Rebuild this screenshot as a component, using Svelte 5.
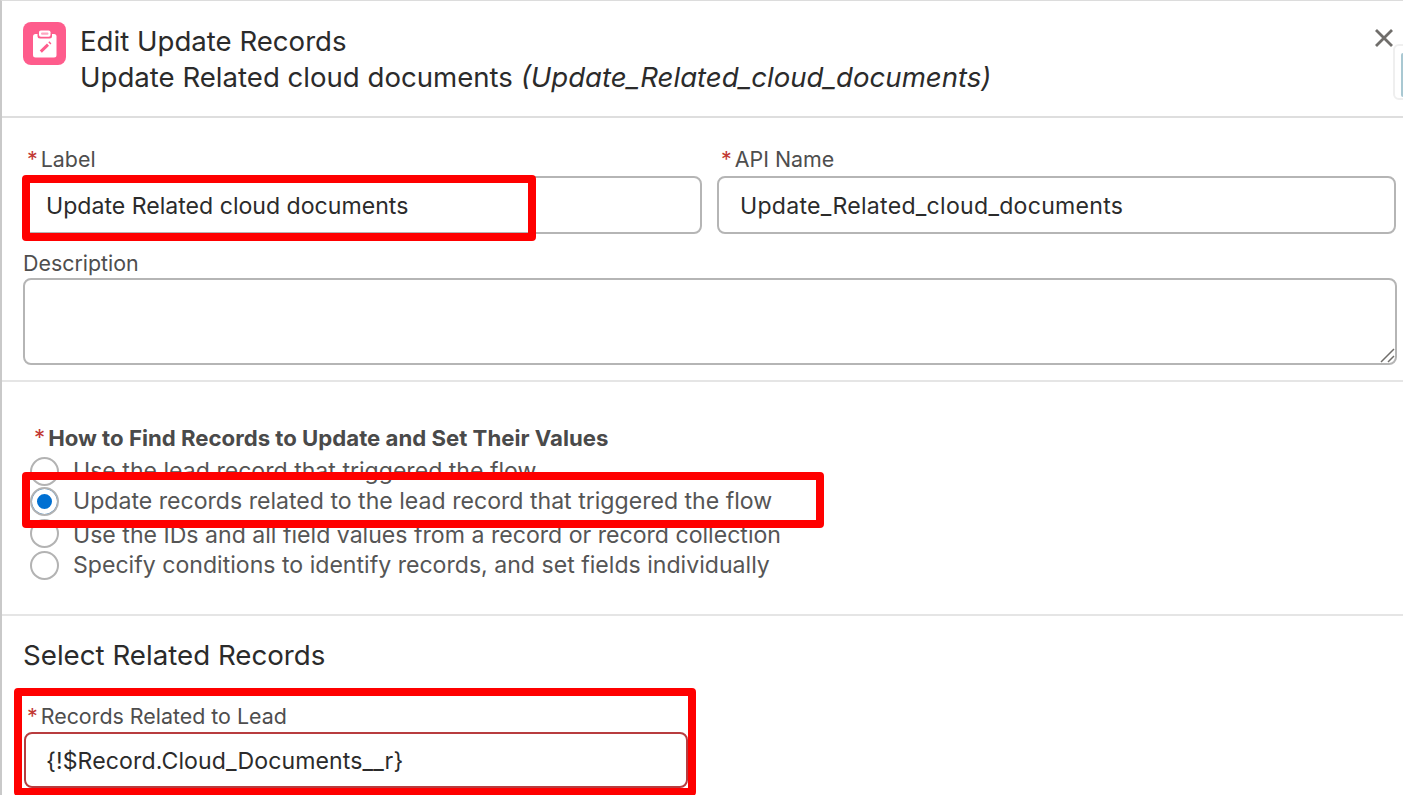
<script>
  const options = [
    { text: 'Use the lead record that triggered the flow', checked: false, cls: 'first' },
    { text: 'Update records related to the lead record that triggered the flow', checked: true, cls: 'second' },
    { text: 'Use the IDs and all field values from a record or record collection', checked: false, cls: 'third' },
    { text: 'Specify conditions to identify records, and set fields individually', checked: false, cls: 'fourth' }
  ];
</script>

<div class="page">
  <header class="head">
    <div class="icon">
      <svg viewBox="0 0 43 43" width="43" height="43">
        <rect x="10" y="12" width="23.500" height="23.500" rx="2.500" fill="#fff" />
        <rect x="14.500" y="7" width="14.500" height="9.500" rx="2.500" fill="#fe5c8c" />
        <rect x="16" y="8.500" width="11.500" height="6.200" rx="1.800" fill="#fff" />
        <rect x="18" y="10.500" width="7.500" height="2.200" rx="1" fill="#fe5c8c" opacity="0.55" />
        <path d="M17.800 29.600L25 22.700" stroke="#fe5c8c" stroke-width="3" fill="none" />
        <path d="M26.300 21.400l1.100-1" stroke="#fe5c8c" stroke-width="3" fill="none" />
      </svg>
    </div>
    <div class="titles">
      <div>Edit Update Records</div>
      <div>Update Related cloud documents <em>(Update_Related_cloud_documents)</em></div>
    </div>
    <button class="close" aria-label="Close">
      <svg viewBox="0 0 20 20" width="20" height="20"><path d="M2 2l16 16M18 2L2 18" stroke="#706e6b" stroke-width="2.800" fill="none" /></svg>
    </button>
    <div class="peek"><span></span></div>
  </header>

  <section class="fields">
    <div class="row">
      <div class="field">
        <div class="label"><i>*</i>Label</div>
        <div class="input">Update Related cloud documents</div>
      </div>
      <div class="field">
        <div class="label"><i>*</i>API Name</div>
        <div class="input api">Update_Related_cloud_documents</div>
      </div>
    </div>
    <div class="label desc-label">Description</div>
    <div class="textarea">
      <svg viewBox="0 0 16 16" width="16" height="16"><path d="M2 15L15 2M9 15l6-6" stroke="#706e6b" stroke-width="1.500" fill="none" /></svg>
    </div>
  </section>

  <section class="how">
    <div class="how-title"><i>*</i>How to Find Records to Update and Set Their Values</div>
    {#each options as o}
      <div class="radio {o.cls}">
        <span class="dot" class:on={o.checked}></span>
        <span class="txt">{o.text}</span>
      </div>
    {/each}
  </section>

  <section class="related">
    <h2>Select Related Records</h2>
    <div class="label rel-label"><i>*</i>Records Related to Lead</div>
    <div class="input err">&lcub;!$Record.Cloud_Documents__r&rcub;</div>
  </section>

  <div class="mark m1"></div>
  <div class="mark m2"></div>
  <div class="mark m3"></div>
</div>

<style>
  :global(body) {
    margin: 0;
    background: #fff;
  }

  .page {
    position: relative;
    width: 1403px;
    height: 795px;
    box-sizing: border-box;
    overflow: hidden;
    border-top: 1px solid #dcdcdc;
    border-left: 2px solid #c9c9c9;
    font-family: Inter, "Liberation Sans", sans-serif;
    color: #2b2b2b;
  }

  .head {
    position: relative;
    display: flex;
    height: 117px;
    box-sizing: border-box;
    padding: 21px 0 0 21px;
    border-bottom: 2px solid #dedede;
  }

  .icon {
    width: 43px;
    height: 43px;
    flex-shrink: 0;
    border-radius: 8px;
    background: #fe5c8c;
  }

  .titles {
    margin: 1px 0 0 14px;
    font-size: 27.600px;
    line-height: 36px;
    white-space: nowrap;
  }

  .titles em {
    font-style: italic;
  }

  .close {
    position: absolute;
    top: 27px;
    right: 9px;
    padding: 0;
    border: 0;
    background: none;
    line-height: 0;
  }

  .peek {
    position: absolute;
    top: 43px;
    right: -8px;
    width: 18px;
    height: 56px;
    box-sizing: border-box;
    padding: 7px 0 0 6px;
    border: 2px solid #efefef;
    border-radius: 6px;
    background: #fff;
  }

  .peek span {
    display: block;
    height: 44px;
    background: #a9c8d2;
    border-radius: 2px 0 0 2px;
  }

  .fields {
    height: 264px;
    box-sizing: border-box;
    padding: 29px 6px 0 21px;
    border-bottom: 2px solid #e5e5e5;
  }

  .row {
    display: grid;
    grid-template-columns: 679px 679px;
    gap: 15px;
  }

  .label {
    height: 29px;
    padding-left: 4px;
    font-size: 21.400px;
    line-height: 24px;
    color: #4e4e4e;
  }

  .label i,
  .how-title i {
    margin-right: 3px;
    font-style: normal;
    font-weight: 400;
    color: #c23934;
  }

  .input {
    height: 58px;
    box-sizing: border-box;
    padding: 0 21px;
    border: 2px solid #b5b5b5;
    border-radius: 8px;
    font-size: 23.100px;
    line-height: 56px;
    white-space: nowrap;
  }

  .input.api {
    letter-spacing: 0.27px;
  }

  .desc-label {
    margin-top: 17px;
    height: 27px;
    padding-left: 0;
  }

  .textarea {
    position: relative;
    height: 87px;
    box-sizing: border-box;
    border: 2px solid #b5b5b5;
    border-radius: 8px;
  }

  .textarea svg {
    position: absolute;
    right: 0;
    bottom: 0;
  }

  .how {
    height: 234px;
    box-sizing: border-box;
    padding: 42px 0 0 32px;
    border-bottom: 2px solid #e5e5e5;
  }

  .how-title {
    height: 32px;
    font-size: 22.200px;
    line-height: 28px;
    font-weight: 700;
    color: #4a4a4a;
    white-space: nowrap;
  }

  .radio {
    display: flex;
    align-items: center;
    gap: 14px;
    height: 30px;
    margin-left: -4px;
    font-size: 23.100px;
    color: #555;
    white-space: nowrap;
  }

  .third {
    margin-top: 2px;
  }

  .third .txt {
    padding-top: 4px;
  }

  .fourth {
    margin-top: 2px;
  }

  .dot {
    width: 29px;
    height: 29px;
    flex-shrink: 0;
    box-sizing: border-box;
    border: 2px solid #b3b3b3;
    border-radius: 50%;
    background: #fff;
  }

  .dot.on {
    background: #0070d2;
    box-shadow: inset 0 0 0 5px #fff;
  }

  .related {
    padding: 21px 0 0 21px;
  }

  .related h2 {
    margin: 0;
    font-size: 27.700px;
    line-height: 36px;
    font-weight: 400;
  }

  .rel-label {
    margin-top: 31px;
    height: 28px;
  }

  .input.err {
    width: 664px;
    height: 56px;
    margin-left: 1px;
    padding: 0 20px;
    border-color: #b83c3f;
    line-height: 54px;
    letter-spacing: 0.1px;
  }

  .mark {
    position: absolute;
    box-sizing: border-box;
    border: 8px solid #ff0000;
    border-radius: 4px;
  }

  .m1 {
    left: 20px;
    top: 174px;
    width: 514px;
    height: 66px;
  }

  .m2 {
    left: 20px;
    top: 471px;
    width: 802px;
    height: 56px;
  }

  .m3 {
    left: 12px;
    top: 687px;
    width: 682px;
    height: 108px;
  }
</style>
